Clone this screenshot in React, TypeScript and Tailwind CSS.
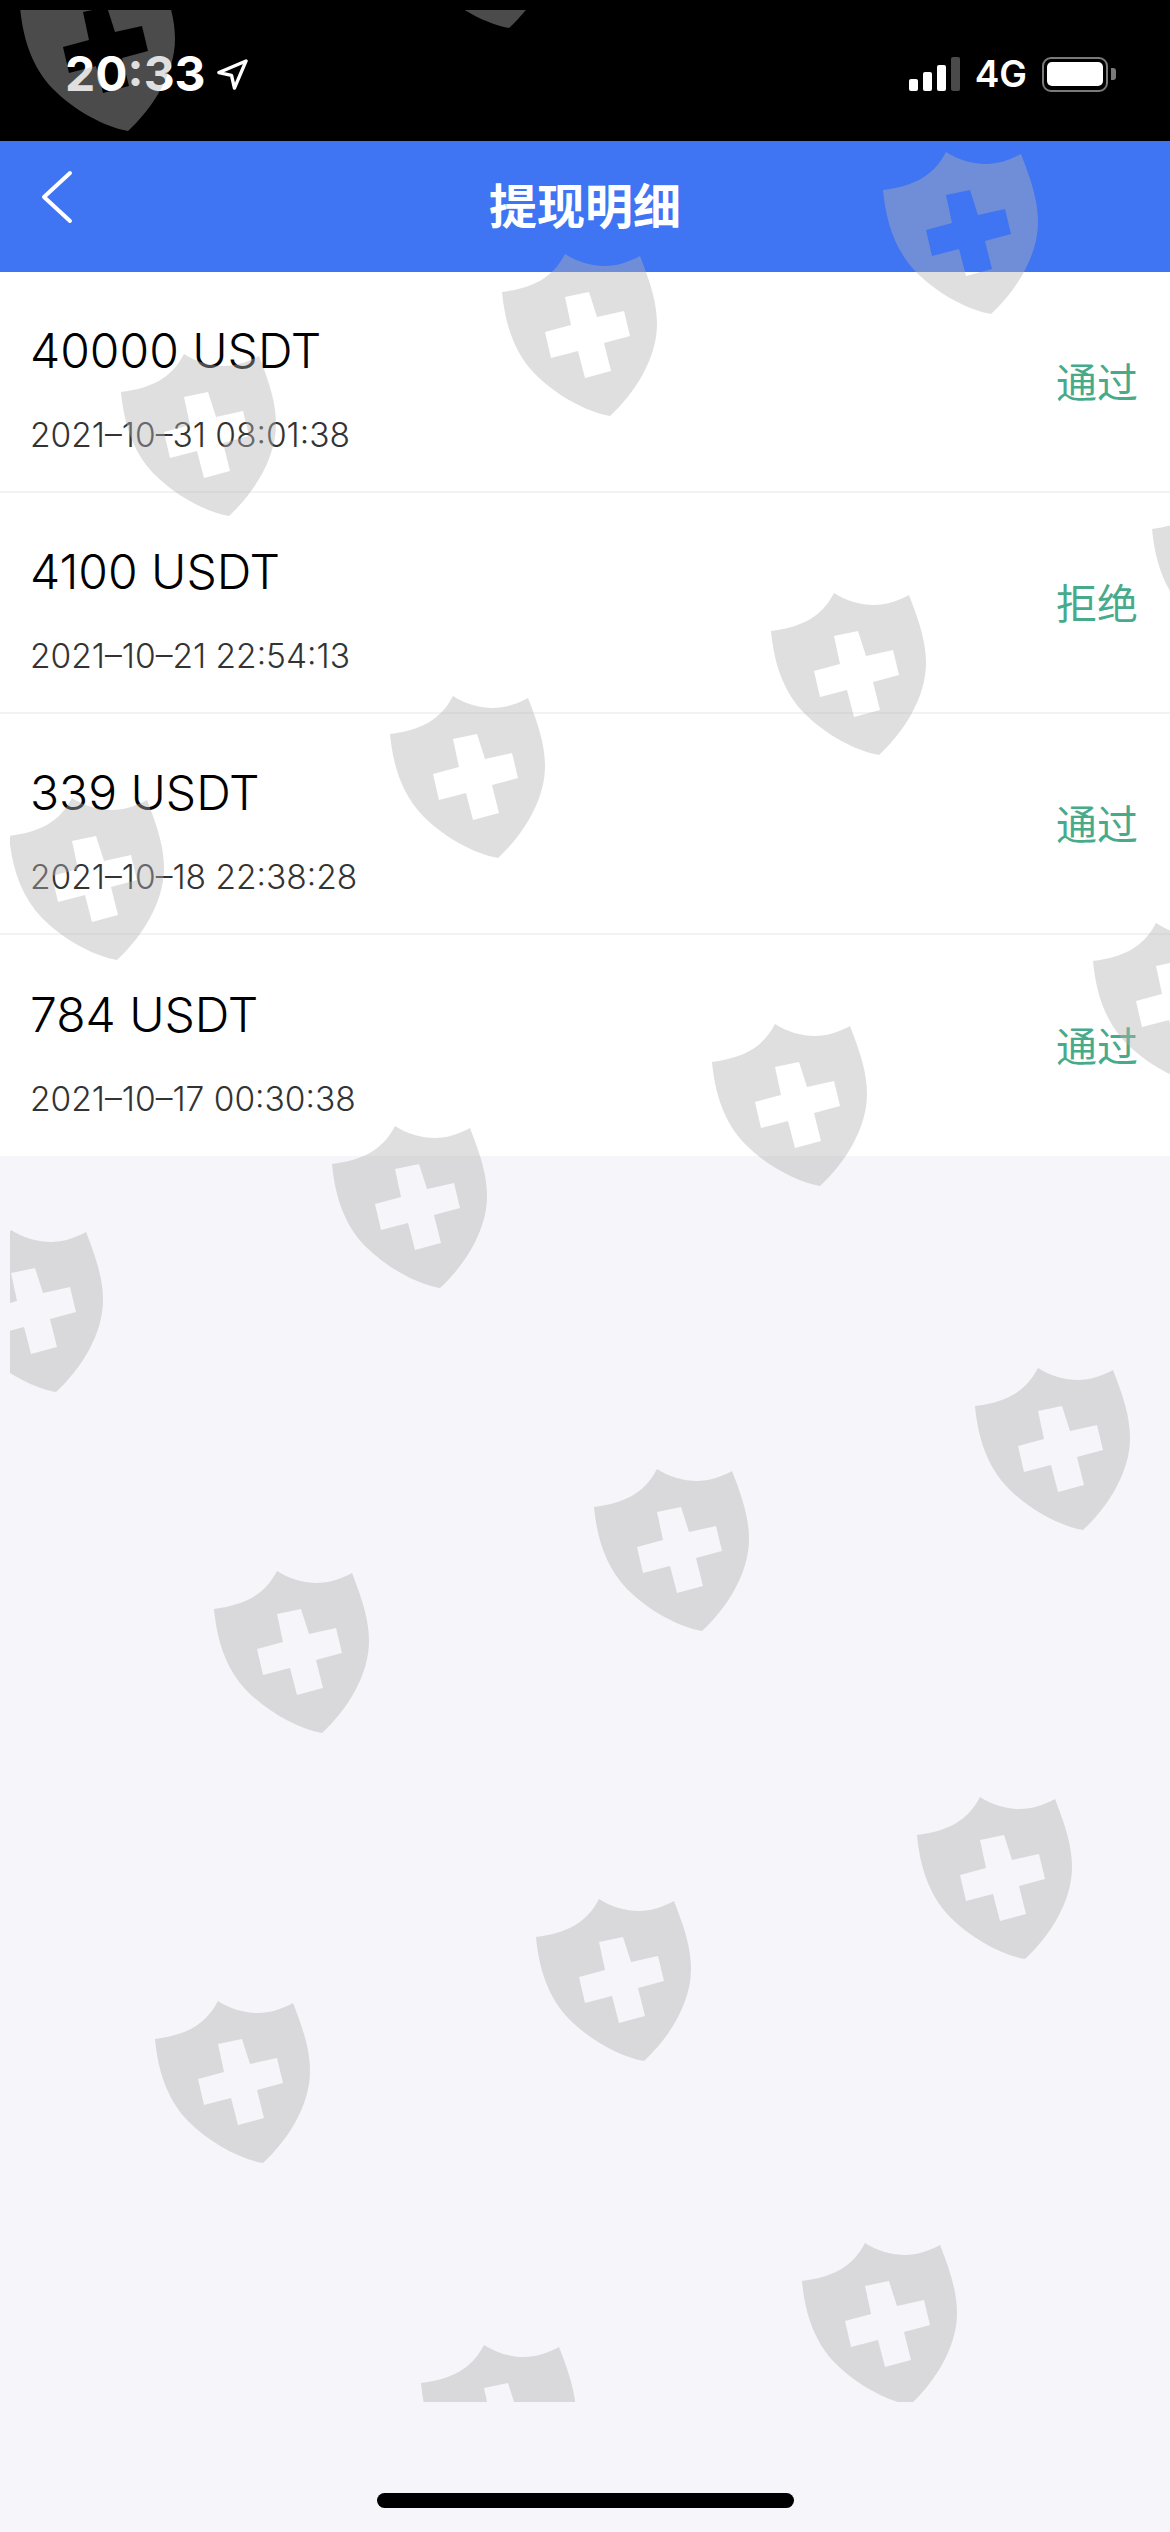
import React from 'react';

const records = [
  { amount: '40000 USDT', time: '2021–10–31 08:01:38', status: '通过' },
  { amount: '4100 USDT', time: '2021–10–21 22:54:13', status: '拒绝' },
  { amount: '339 USDT', time: '2021–10–18 22:38:28', status: '通过' },
  { amount: '784 USDT', time: '2021–10–17 00:30:38', status: '通过' },
];

// top-left corner of every stamp on the overlay
const stamps = [
  [20, -31], [401, -134], [883, 152], [502, 254], [121, 354],
  [1152, 491], [771, 593], [390, 696], [9, 798],
  [1093, 923], [712, 1024], [332, 1126], [-52, 1230],
  [975, 1368], [594, 1469], [214, 1571],
  [917, 1797], [536, 1899], [155, 2001],
  [802, 2243], [421, 2345],
];

const SHIELD =
  'M63 0C75 8 90 12 103 12C115 12 127 8 138 2C149 30 155 50 155 70C155 105 132 140 108 162C85 158 55 142 33 120C12 98 3 70 0 38C30 34 50 25 63 0Z' +
  'M63 43L87 38L95 63L122 57L128 82L102 89L109 117L83 124L76 97L49 104L43 78L69 71Z';

const Stamp = ({ x, y }: { x: number; y: number }) => (
  <svg
    className="absolute"
    style={{ left: x - 10, top: y - 10 }}
    width="156"
    height="162"
    viewBox="0 0 156 162"
  >
    <path d={SHIELD} fill="#b2b2b2" fillOpacity="0.42" fillRule="evenodd" />
  </svg>
);

const StatusBar = () => (
  <div className="flex h-[141px] items-start justify-between bg-black pl-[65px] pr-[54px] pt-[45px] text-white">
    <div className="flex items-center gap-[11px]">
      <span className="text-[48px] leading-[58px] font-bold">20:33</span>
      <svg width="31" height="31" viewBox="0 0 32 32" fill="none" stroke="#fff" strokeWidth="3.5" strokeLinejoin="round">
        <path d="M30 2L2 14L15 17L18 30Z" />
      </svg>
    </div>
    <div className="flex items-center gap-[15px] pt-[11px]">
      <div className="flex items-end gap-[5px]">
        <span className="h-[12px] w-[9px] rounded-[2px] bg-white" />
        <span className="h-[19px] w-[9px] rounded-[2px] bg-white" />
        <span className="h-[26px] w-[9px] rounded-[2px] bg-white" />
        <span className="h-[34px] w-[9px] rounded-[2px] bg-[#4a4a4a]" />
      </div>
      <span className="text-[37px] leading-[36px] font-semibold">4G</span>
      <div className="flex items-center gap-[3px]">
        <div className="flex h-[35px] w-[66px] items-center justify-center rounded-[9px] border-2 border-[#7a7a7a]">
          <div className="h-[24px] w-[56px] rounded-[5px] bg-white" />
        </div>
        <span className="h-[12px] w-[5px] rounded-r-[3px] bg-[#7a7a7a]" />
      </div>
    </div>
  </div>
);

const Header = () => (
  <div className="relative flex h-[131px] items-center justify-center bg-[#3f74f2]">
    <svg
      className="absolute left-[38px] top-[28px]"
      width="38"
      height="56"
      viewBox="0 0 38 56"
      fill="none"
      stroke="#fff"
      strokeWidth="4"
      strokeLinecap="round"
      strokeLinejoin="round"
    >
      <path d="M32 4L6 28L32 52" />
    </svg>
    <span className="text-[48px] leading-[60px] font-bold text-white">提现明细</span>
  </div>
);

export default function App() {
  return (
    <div className="relative h-[2532px] w-full overflow-hidden bg-[#f5f5fa] font-['Inter','Noto_Sans_CJK_SC',sans-serif]">
      <StatusBar />
      <Header />
      <div className="bg-white">
        {records.map((r, i) => (
          <div
            key={r.time}
            className={`flex h-[221px] items-center justify-between pl-[30px] pr-[32px] ${
              i < records.length - 1 ? 'border-b-2 border-[#f3f3f3]' : ''
            }`}
          >
            <div className="flex flex-col gap-[35px] pt-[15px]">
              <span className="text-[48px] leading-[56px] font-light text-black">{r.amount}</span>
              <span className="text-[33.5px] leading-[42px] font-light text-[#333333]">{r.time}</span>
            </div>
            <span className="pt-[2px] text-[41px] leading-[50px] font-normal text-[#47ab8b]">{r.status}</span>
          </div>
        ))}
      </div>
      <div className="absolute bottom-[24px] left-[377px] h-[15px] w-[417px] rounded-full bg-black" />
      <div className="pointer-events-none absolute left-[10px] right-0 top-[10px] h-[2392px] overflow-hidden">
        {stamps.map(([x, y]) => (
          <Stamp key={`${x}-${y}`} x={x} y={y} />
        ))}
      </div>
    </div>
  );
}
